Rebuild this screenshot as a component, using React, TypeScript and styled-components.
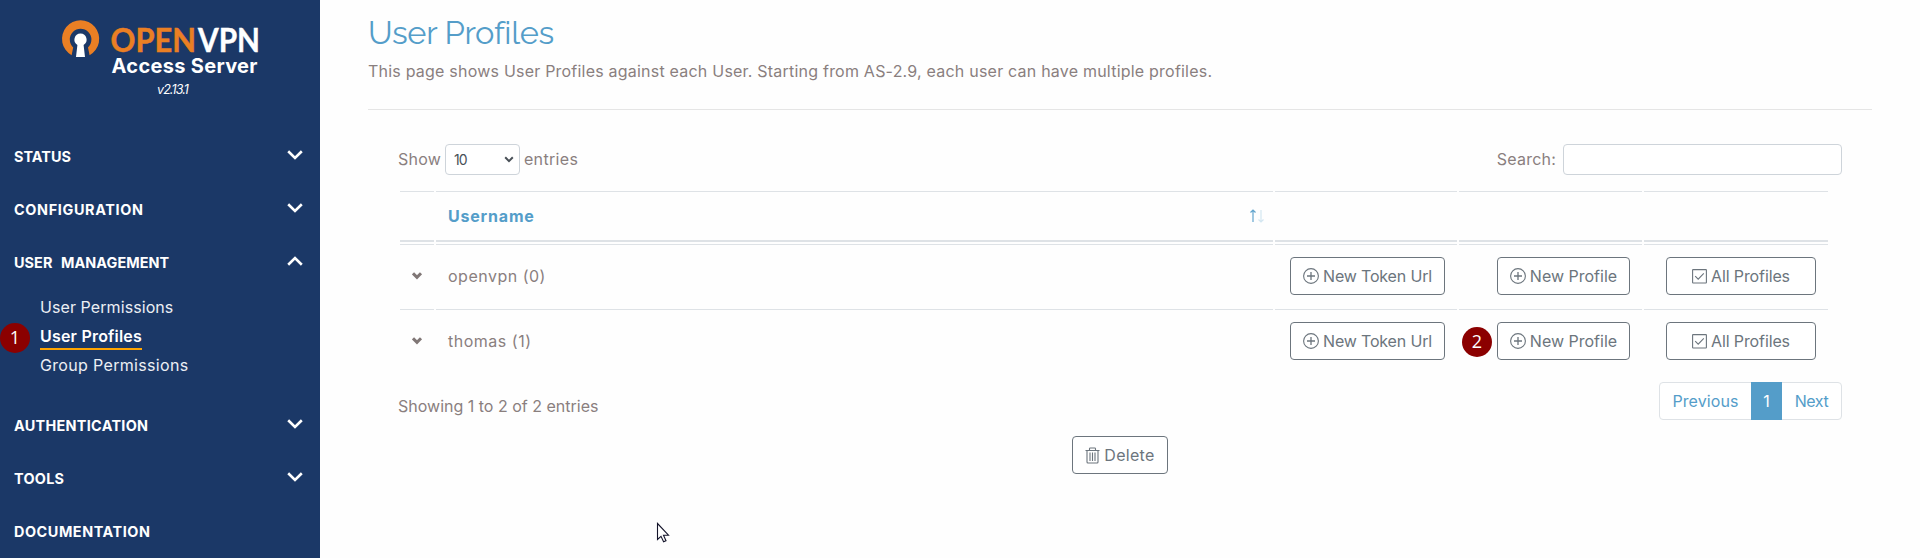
import React from 'react';
import styled, { createGlobalStyle, css } from 'styled-components';

const GlobalStyle = createGlobalStyle`
  *, *::before, *::after { box-sizing: border-box; }
  html, body { margin: 0; padding: 0; }
  body {
    background: #fefefe;
    color: #8a7f7e;
    font: 400 16px/24px Inter, 'Liberation Sans', sans-serif;
    overflow: hidden;
  }
  button, input { font: inherit; color: inherit; }
`;

type Spaced = { $ls?: number };
const tracking = css<Spaced>`letter-spacing: ${({ $ls = 0 }) => $ls}px;`;

const Page = styled.div`
  display: flex;
  height: 558px;
  overflow: hidden;
`;

/* Sidebar */
const Sidebar = styled.aside`
  width: 320px;
  flex: none;
  background: #1b3867;
  color: #fff;
`;

const Brand = styled.div`
  display: flex;
  flex-direction: column;
  height: 130px;
  padding: 18px 0 0 60px;
`;

const LogoMark = styled.svg`
  overflow: visible;
`;

const Version = styled.em`
  padding-left: 97px;
  margin-top: 1px;
  font-size: 12.5px;
  line-height: 18px;
  letter-spacing: -0.9px;
`;

const NavHeading = styled.button`
  display: flex;
  align-items: center;
  justify-content: space-between;
  width: 100%;
  height: 53px;
  padding: 0 16px 0 14px;
  border: 0;
  background: none;
  color: #fff;
  text-align: left;
  cursor: pointer;
`;

const NavLabel = styled.span<Spaced>`
  font-size: 14.4px;
  font-weight: 700;
  word-spacing: 5px;
  ${tracking}
`;

const NavChevron = styled.svg<{ $open?: boolean }>`
  width: 16px;
  height: 10px;
  margin: 0 1px 3px 0;
  transform: ${({ $open }) => ($open ? 'rotate(180deg)' : 'none')};
`;

const SubNav = styled.ul`
  margin: 0;
  padding: 6px 0 17px 40px;
  list-style: none;
`;

const SubItem = styled.li`
  position: relative;
  display: flex;
  height: 29px;
`;

const SubLink = styled.a<Spaced & { $active?: boolean }>`
  height: 26px;
  line-height: 24px;
  color: ${({ $active }) => ($active ? '#fff' : '#eceff4')};
  font-weight: ${({ $active }) => ($active ? 600 : 400)};
  border-bottom: 2px solid ${({ $active }) => ($active ? '#ffa500' : 'transparent')};
  white-space: nowrap;
  ${tracking}
`;

const StepBadge = styled.span<{ $left: number; $top: number }>`
  position: absolute;
  left: ${({ $left }) => $left}px;
  top: ${({ $top }) => $top}px;
  width: 30px;
  height: 30px;
  border-radius: 50%;
  background: #8b0000;
  color: #fff;
  font: 400 18px/29px 'Open Sans', sans-serif;
  text-align: center;
`;

/* Main */
const Main = styled.main`
  flex: 1;
  padding: 13px 48px 0;
`;

const Title = styled.h1`
  margin: 0;
  height: 46px;
  color: #549dc9;
  font: 400 32.6px/40px Raleway, Lato, sans-serif;
  letter-spacing: -0.3px;
`;

const Intro = styled.p`
  margin: 0;
  height: 50px;
  letter-spacing: 0.215px;
`;

const Section = styled.section`
  border-top: 1px solid #e5e5e5;
  padding: 34px 30px 0;
`;

const Controls = styled.div`
  display: flex;
  justify-content: space-between;
  align-items: center;
  height: 31px;
  margin-bottom: 14px;
`;

const ControlGroup = styled.label`
  display: flex;
  align-items: center;
`;

const Text = styled.span<Spaced>`
  white-space: nowrap;
  padding-bottom: 1px;
  ${tracking}
`;

const PageSize = styled.span`
  display: flex;
  align-items: center;
  justify-content: space-between;
  width: 75px;
  height: 31px;
  margin: 0 4px;
  padding: 0 5px 0 8px;
  border: 1px solid #ced4da;
  border-radius: 4px;
  background: #fff;
  color: #495057;
  font-size: 14px;
  letter-spacing: -1px;
`;

const SearchInput = styled.input`
  width: 279px;
  height: 31px;
  margin-left: 7px;
  border: 1px solid #ced4da;
  border-radius: 4px;
  background: #fff;
`;

const Table = styled.table`
  width: 1432px;
  table-layout: fixed;
  border-collapse: separate;
  border-spacing: 2px;
`;

const HeadCell = styled.th<{ $w?: number }>`
  width: ${({ $w }) => ($w ? `${$w}px` : 'auto')};
  height: 51px;
  padding: 12px 9px 12px 12px;
  border-top: 1px solid #dee2e6;
  border-bottom: 2px solid #dee2e6;
  text-align: left;
`;

const SortHeader = styled.div`
  display: flex;
  align-items: center;
  justify-content: space-between;
  height: 24px;
  color: #549dc9;
  font-weight: 650;
`;

const Cell = styled.td<{ $align?: string }>`
  position: relative;
  height: 63px;
  padding: 12px;
  border-top: 1px solid #dee2e6;
  text-align: ${({ $align = 'left' }) => $align};
  vertical-align: middle;
  line-height: 0;
`;

const UserName = styled.span<Spaced>`
  display: block;
  line-height: 24px;
  ${tracking}
`;

const ActionButton = styled.button<Spaced & { $w: number }>`
  display: inline-flex;
  align-items: center;
  justify-content: center;
  gap: 4px;
  width: ${({ $w }) => $w}px;
  height: 38px;
  padding: 0;
  border: 1px solid #6c757d;
  border-radius: 4px;
  background: #fff;
  color: #6c757d;
  line-height: 24px;
  white-space: nowrap;
  cursor: pointer;
  ${tracking}
  svg { flex: none; }
`;

const Footer = styled.div`
  display: flex;
  justify-content: space-between;
  margin-top: 8px;
`;

const Summary = styled.div`
  padding-top: 12px;
`;

const Pagination = styled.div`
  display: flex;
  height: 38px;
  border: 1px solid #dee2e6;
  border-radius: 4px;
  background: #fff;
`;

const PageLink = styled.a<Spaced & { $w: number; $active?: boolean }>`
  width: ${({ $w }) => $w}px;
  height: 38px;
  margin-top: -1px;
  line-height: 38px;
  text-align: center;
  color: ${({ $active }) => ($active ? '#fff' : '#549dc9')};
  background: ${({ $active }) => ($active ? '#549dc9' : 'transparent')};
  ${tracking}
`;

const DeleteBar = styled.div`
  display: flex;
  justify-content: center;
  margin-top: 16px;
`;

const Pointer = styled.svg`
  position: absolute;
  left: 656px;
  top: 522px;
`;

const Logo = () => (
  <LogoMark width="204" height="62" viewBox="60 18 204 62">
    <path
      d="M71.6 55.2A18.6 18.6 0 1 1 89.6 55.2L88 47.4A10.8 10.8 0 1 0 73.2 47.4Z"
      fill="#ea7f24"
    />
    <path
      d="M80.5 33.5a6.2 6.2 0 0 1 3.1 11.5L85 57H76L77.4 45a6.2 6.2 0 0 1 3.1-11.5Z"
      fill="#fff"
    />
    <g fontFamily="Lato, sans-serif" fontWeight="700" fontSize="33">
      <text x="110.500" y="51.600" fill="#ea7f24" stroke="#ea7f24" strokeWidth="0.5" textLength="85.500" lengthAdjust="spacingAndGlyphs">OPEN</text>
      <text x="198" y="51.600" fill="#fff" stroke="#fff" strokeWidth="0.400" textLength="62" lengthAdjust="spacingAndGlyphs">VPN</text>
    </g>
    <text x="111.500" y="72.800" fill="#fff" fontFamily="Inter, sans-serif" fontWeight="750" fontSize="20" textLength="146">
      Access Server
    </text>
  </LogoMark>
);

const Chevron = ({ open }: { open?: boolean }) => (
  <NavChevron $open={open} viewBox="0 0 16 10" fill="none" stroke="#fff" strokeWidth="2.6">
    <path d="M1.2 1.300 8 8 14.800 1.300" />
  </NavChevron>
);

const PlusCircle = () => (
  <svg width="16" height="16" viewBox="0 0 16 16" fill="none" stroke="#6c757d" strokeWidth="1.1">
    <circle cx="8" cy="8" r="7.400" />
    <path d="M8 4v8M4 8h8" strokeWidth="1.300" />
  </svg>
);

const CheckBox = () => (
  <svg width="15" height="15" viewBox="0 0 15 15" fill="none" stroke="#6c757d" strokeWidth="1.1">
    <rect x="0.6" y="0.6" width="13.800" height="13.400" rx="0.5" />
    <path d="M3.200 7.200 6.200 10.200 11.800 4.400" />
  </svg>
);

const Trash = () => (
  <svg width="15" height="17" viewBox="0 0 15 17" fill="none" stroke="#6c757d" strokeWidth="1.1">
    <path d="M0.500 3.500H14.500M4.500 3.300V1.800Q4.500 1 5.300 1H9.700Q10.500 1 10.500 1.800V3.300M2 3.500V15Q2 16 3 16H12Q13 16 13 15V3.500M5 5.500V14M7.500 5.500V14M10 5.500V14" />
  </svg>
);

const RowChevron = () => (
  <svg width="12" height="8" viewBox="0 0 12 8" fill="none" stroke="#807776" strokeWidth="3">
    <path d="M1 1.300 5 5.300 9 1.300" />
  </svg>
);

const SelectArrow = () => (
  <svg width="10" height="7" viewBox="0 0 10 7" fill="none" stroke="#495057" strokeWidth="2">
    <path d="M1.200 1.300 5 5.100 8.800 1.300" />
  </svg>
);

const SortArrows = () => (
  <svg width="14" height="14" viewBox="0 0 14 14" fill="none" strokeWidth="1.2">
    <path d="M3 13V1M0.500 3.500 3 1 5.500 3.500" stroke="#63a5cd" />
    <path d="M11 1V13M8.500 10.500 11 13 13.500 10.500" stroke="#d3e6f1" />
  </svg>
);

type Group = {
  label: string;
  ls: number;
  leaf?: boolean;
  items?: { label: string; ls: number; active?: boolean }[];
};

const groups: Group[] = [
  { label: 'STATUS', ls: 0.05 },
  { label: 'CONFIGURATION', ls: 0.655 },
  {
    label: 'USER MANAGEMENT',
    ls: 0.08,
    items: [
      { label: 'User Permissions', ls: 0.08 },
      { label: 'User Profiles', ls: 0.2, active: true },
      { label: 'Group Permissions', ls: 0.33 },
    ],
  },
  { label: 'AUTHENTICATION', ls: 0.3 },
  { label: 'TOOLS', ls: 0.28 },
  { label: 'DOCUMENTATION', ls: 0.56, leaf: true },
];

const users = [
  { name: 'openvpn (0)', ls: 0.5 },
  { name: 'thomas (1)', ls: 0.51, step: '2' },
];

export default function App() {
  return (
    <Page>
      <GlobalStyle />
      <Sidebar>
        <Brand>
          <Logo />
          <Version>v2.13.1</Version>
        </Brand>
        <nav>
          {groups.map((g) => (
            <React.Fragment key={g.label}>
              <NavHeading>
                <NavLabel $ls={g.ls}>{g.label}</NavLabel>
                {!g.leaf && <Chevron open={!!g.items} />}
              </NavHeading>
              {g.items && (
                <SubNav>
                  {g.items.map((i) => (
                    <SubItem key={i.label}>
                      {i.active && <StepBadge $left={-40} $top={-1}>1</StepBadge>}
                      <SubLink $ls={i.ls} $active={i.active}>{i.label}</SubLink>
                    </SubItem>
                  ))}
                </SubNav>
              )}
            </React.Fragment>
          ))}
        </nav>
      </Sidebar>
      <Main>
        <Title>User Profiles</Title>
        <Intro>
          This page shows User Profiles against each User. Starting from AS-2.9, each user can have multiple profiles.
        </Intro>
        <Section>
          <Controls>
            <ControlGroup>
              <Text $ls={0.2}>Show</Text>
              <PageSize>10<SelectArrow /></PageSize>
              <Text $ls={0.344}>entries</Text>
            </ControlGroup>
            <ControlGroup>
              <Text $ls={0.216}>Search:</Text>
              <SearchInput />
            </ControlGroup>
          </Controls>
          <Table>
            <thead>
              <tr>
                <HeadCell $w={34} />
                <HeadCell>
                  <SortHeader>
                    <Text $ls={0.8}>Username</Text>
                    <SortArrows />
                  </SortHeader>
                </HeadCell>
                <HeadCell $w={182} />
                <HeadCell $w={183} />
                <HeadCell $w={184} />
              </tr>
            </thead>
            <tbody>
              {users.map((u) => (
                <tr key={u.name}>
                  <Cell><RowChevron /></Cell>
                  <Cell><UserName $ls={u.ls}>{u.name}</UserName></Cell>
                  <Cell $align="right">
                    <ActionButton $w={155} $ls={-0.17}><PlusCircle />New Token Url</ActionButton>
                  </Cell>
                  <Cell $align="right">
                    {u.step && <StepBadge $left={3} $top={17}>{u.step}</StepBadge>}
                    <ActionButton $w={133}><PlusCircle />New Profile</ActionButton>
                  </Cell>
                  <Cell $align="right">
                    <ActionButton $w={150} $ls={-0.12}><CheckBox />All Profiles</ActionButton>
                  </Cell>
                </tr>
              ))}
            </tbody>
          </Table>
          <Footer>
            <Summary>Showing 1 to 2 of 2 entries</Summary>
            <Pagination>
              <PageLink $w={91} $ls={0.09}>Previous</PageLink>
              <PageLink $w={31} $active>1</PageLink>
              <PageLink $w={59} $ls={-0.4}>Next</PageLink>
            </Pagination>
          </Footer>
          <DeleteBar>
            <ActionButton $w={96} $ls={0.3}><Trash />Delete</ActionButton>
          </DeleteBar>
        </Section>
      </Main>
      <Pointer width="14" height="22" viewBox="0 0 14 22">
        <path
          d="M1.500 1.500V17.500L5 14.300 7.600 19.800 10 18.700 7.500 13.200H12.500Z"
          fill="#fff"
          stroke="#14142a"
          strokeWidth="1.100"
        />
      </Pointer>
    </Page>
  );
}
